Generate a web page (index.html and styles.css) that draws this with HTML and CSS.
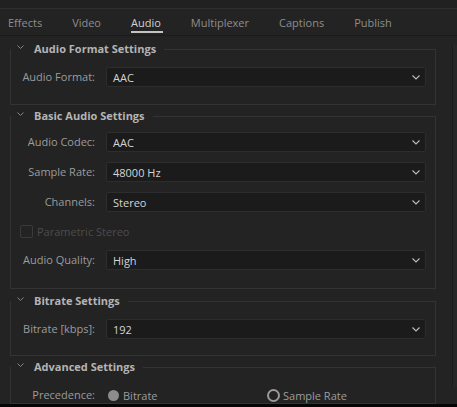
FILE: index.html
```html
<!DOCTYPE html>
<html>
<head>
<meta charset="utf-8">
<link rel="stylesheet" href="styles.css">
</head>
<body>
<div class="app">
  <div class="topstrip"></div>
  <nav class="tabs">
    <span class="tab">Effects</span>
    <span class="tab">Video</span>
    <span class="tab active">Audio</span>
    <span class="tab">Multiplexer</span>
    <span class="tab">Captions</span>
    <span class="tab">Publish</span>
  </nav>
  <div class="main">
    <div class="content">
      <fieldset class="sec sec1">
        <legend><svg class="chev" width="7" height="4" viewBox="0 0 7 4"><path d="M0.5 0.5 L3.5 3.5 L6.5 0.5" fill="none" stroke="#858585" stroke-width="1"/></svg>Audio Format Settings</legend>
        <div class="grid">
          <label>Audio Format:</label>
          <div class="select"><span>AAC</span><svg class="dd" width="8" height="5" viewBox="0 0 8 5"><path d="M0.5 0.5 L4 4 L7.5 0.5" fill="none" stroke="#bdbdbd" stroke-width="1.1"/></svg></div>
        </div>
      </fieldset>
      <fieldset class="sec sec2">
        <legend><svg class="chev" width="7" height="4" viewBox="0 0 7 4"><path d="M0.5 0.5 L3.5 3.5 L6.5 0.5" fill="none" stroke="#858585" stroke-width="1"/></svg>Basic Audio Settings</legend>
        <div class="grid">
          <label>Audio Codec:</label>
          <div class="select"><span>AAC</span><svg class="dd" width="8" height="5" viewBox="0 0 8 5"><path d="M0.5 0.5 L4 4 L7.5 0.5" fill="none" stroke="#bdbdbd" stroke-width="1.1"/></svg></div>
          <label>Sample Rate:</label>
          <div class="select"><span>48000 Hz</span><svg class="dd" width="8" height="5" viewBox="0 0 8 5"><path d="M0.5 0.5 L4 4 L7.5 0.5" fill="none" stroke="#bdbdbd" stroke-width="1.1"/></svg></div>
          <label>Channels:</label>
          <div class="select"><span>Stereo</span><svg class="dd" width="8" height="5" viewBox="0 0 8 5"><path d="M0.5 0.5 L4 4 L7.5 0.5" fill="none" stroke="#bdbdbd" stroke-width="1.1"/></svg></div>
          <div class="check"><span class="box"></span>Parametric Stereo</div>
          <label>Audio Quality:</label>
          <div class="select"><span>High</span><svg class="dd" width="8" height="5" viewBox="0 0 8 5"><path d="M0.5 0.5 L4 4 L7.5 0.5" fill="none" stroke="#bdbdbd" stroke-width="1.1"/></svg></div>
        </div>
      </fieldset>
      <fieldset class="sec sec3">
        <legend><svg class="chev" width="7" height="4" viewBox="0 0 7 4"><path d="M0.5 0.5 L3.5 3.5 L6.5 0.5" fill="none" stroke="#858585" stroke-width="1"/></svg>Bitrate Settings</legend>
        <div class="grid">
          <label>Bitrate [kbps]:</label>
          <div class="select"><span>192</span><svg class="dd" width="8" height="5" viewBox="0 0 8 5"><path d="M0.5 0.5 L4 4 L7.5 0.5" fill="none" stroke="#bdbdbd" stroke-width="1.1"/></svg></div>
        </div>
      </fieldset>
      <fieldset class="sec sec4">
        <legend><svg class="chev" width="7" height="4" viewBox="0 0 7 4"><path d="M0.5 0.5 L3.5 3.5 L6.5 0.5" fill="none" stroke="#858585" stroke-width="1"/></svg>Advanced Settings</legend>
        <div class="grid">
          <label class="prec">Precedence:</label>
          <div class="radios">
            <span class="radio"><span class="dot filled"></span>Bitrate</span>
            <span class="radio"><span class="dot ring"></span>Sample Rate</span>
          </div>
        </div>
      </fieldset>
    </div>
    <div class="scroll"></div>
  </div>
  <div class="footer"></div>
</div>
</body>
</html>
```

FILE: styles.css
```css
* { box-sizing: border-box; }
html, body { margin: 0; padding: 0; background: #232323; }
body { font-family: "Open Sans", "Noto Sans", sans-serif; font-size: 11px; color: #a0a0a0; }
.app { width: 457px; height: 407px; display: flex; flex-direction: column; overflow: hidden; background: #232323; }
.topstrip { height: 9px; flex: none; border-bottom: 1px solid #2f2f2f; background: #212121; }
.tabs { height: 27px; flex: none; display: flex; align-items: stretch; padding-left: 8px; gap: 30px; border-bottom: 1px solid #1a1a1a; }
.tab { display: flex; align-items: center; padding-top: 1px; color: #8e8e8e; position: relative; }
.tab.active { color: #d2d2d2; }
.tab.active::after { content: ""; position: absolute; left: 0; right: -2px; bottom: 2px; height: 2px; background: #c4c4c4; }
.main { flex: 1; display: flex; min-height: 0; }
.content { flex: 1; overflow: hidden; padding: 5px 16px 0 10px; }
.scroll { width: 5px; flex: none; background: #272727; border-left: 1px solid #1c1c1c; margin-top: 9px; margin-bottom: 17px; }
.footer { height: 3px; flex: none; background: #050505; }

.sec { border: 1px solid #333333; margin: 0 0 3px 0; padding: 0 9px 0 0; min-width: 0; }
.sec legend { margin: 0; padding: 0 8px 0 6px; height: 16px; line-height: 16px; font-weight: 700; color: #b4b4b4; display: flex; align-items: center; }
.chev { margin-right: 10px; margin-top: -4px; flex: none; }

.grid { display: grid; grid-template-columns: 84px 1fr; column-gap: 11px; row-gap: 10px; align-items: center; }
.grid label { text-align: right; color: #9c9c9c; line-height: 20px; }
.grid label.prec { line-height: 16px; }
.select { height: 20px; background: #1b1b1b; border: 1px solid #2d2d2d; border-radius: 2px; display: flex; align-items: center; justify-content: space-between; padding: 0 5px 0 6px; color: #d4d4d4; }
.dd { flex: none; }

.sec1 { padding-bottom: 17px; }
.sec1 .grid { padding-top: 10px; }
.sec2 { padding-bottom: 18px; margin-bottom: 4px; }
.sec2 .grid { padding-top: 8px; }
.sec3 { padding-bottom: 16px; }
.sec3 .grid { padding-top: 10px; }
.sec4 .grid { padding-top: 12px; }

.check { grid-column: 1 / 3; height: 18px; display: flex; align-items: center; padding-left: 9px; color: #4c4c4c; }
.check .box { width: 13px; height: 13px; border: 1px solid #3a3a3a; border-radius: 2px; margin-right: 4px; }

.radios { display: flex; height: 16px; align-items: center; }
.radio { display: flex; align-items: center; color: #9c9c9c; }
.radio:first-child { width: 161px; }
.dot { width: 11px; height: 11px; border-radius: 50%; margin: 0 4px 0 2px; }
.dot.filled { background: #8c8c8c; }
.dot.ring { width: 13px; height: 13px; border: 2px solid #9a9a9a; margin: 0 3px 0 0; }
```
